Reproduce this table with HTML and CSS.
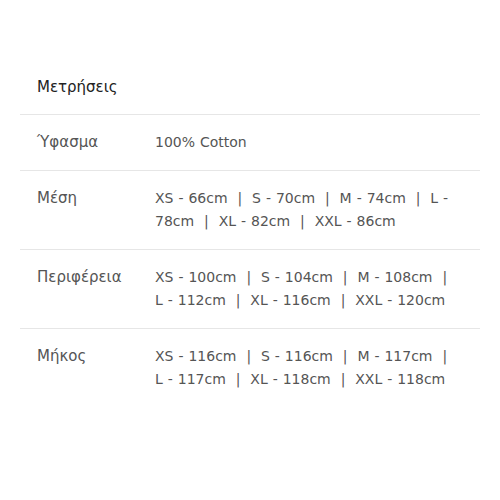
FILE: index.html
```html
<!DOCTYPE html>
<html lang="el">
<head>
<meta charset="utf-8">
<link rel="stylesheet" href="styles.css">
</head>
<body>
<section class="specs">
  <h2 class="specs-title">Μετρήσεις</h2>
  <div class="spec-row">
    <div class="spec-label">Ύφασμα</div>
    <div class="spec-value">100% Cotton</div>
  </div>
  <div class="spec-row">
    <div class="spec-label">Μέση</div>
    <div class="spec-value">XS - 66cm &nbsp;|&nbsp; S - 70cm &nbsp;|&nbsp; M - 74cm &nbsp;|&nbsp; L - 78cm &nbsp;|&nbsp; XL - 82cm &nbsp;|&nbsp; XXL - 86cm</div>
  </div>
  <div class="spec-row">
    <div class="spec-label">Περιφέρεια</div>
    <div class="spec-value">XS - 100cm &nbsp;|&nbsp; S - 104cm &nbsp;|&nbsp; M - 108cm &nbsp;|&nbsp; L - 112cm &nbsp;|&nbsp; XL - 116cm &nbsp;|&nbsp; XXL - 120cm</div>
  </div>
  <div class="spec-row">
    <div class="spec-label">Μήκος</div>
    <div class="spec-value">XS - 116cm &nbsp;|&nbsp; S - 116cm &nbsp;|&nbsp; M - 117cm &nbsp;|&nbsp; L - 117cm &nbsp;|&nbsp; XL - 118cm &nbsp;|&nbsp; XXL - 118cm</div>
  </div>
</section>
</body>
</html>
```

FILE: styles.css
```css
html, body {
  margin: 0;
  padding: 0;
  background: #ffffff;
}
body {
  font-family: "DejaVu Sans", "Liberation Sans", sans-serif;
  color: #555555;
}
.specs {
  margin: 76px 20px 0 20px;
}
.specs-title {
  margin: 0 0 15px 0;
  padding-left: 17px;
  font-size: 15px;
  line-height: 23px;
  font-weight: normal;
  color: #222222;
}
.spec-row {
  display: grid;
  grid-template-columns: 118px 1fr;
  padding: 16px 18px 16px 17px;
  border-top: 1px solid #e6e6e6;
  font-size: 14px;
  line-height: 23px;
}
.spec-label {
  font-size: 15px;
}
.spec-value {
  word-spacing: 0.5px;
}
```
